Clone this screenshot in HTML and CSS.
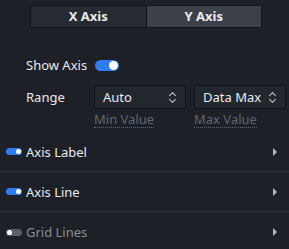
FILE: index.html
```html
<!DOCTYPE html>
<html lang="en">
<head>
    <meta charset="UTF-8">
    <title>Axis Settings</title>
    <link rel="stylesheet" href="styles.css">
</head>
<body>
    <div class="tabs">
        <div class="tab">X Axis</div>
        <div class="tab active">Y Axis</div>
    </div>

    <div class="form">
        <div class="row">
            <span class="label">Show Axis</span>
            <span class="switch on"></span>
        </div>
        <div class="row range">
            <span class="label">Range</span>
            <div class="field">
                <div class="select">Auto<span class="arrows"></span></div>
                <span class="hint">Min Value</span>
            </div>
            <div class="field">
                <div class="select">Data Max<span class="arrows"></span></div>
                <span class="hint">Max Value</span>
            </div>
        </div>
    </div>

    <div class="sections">
        <div class="section">
            <span class="mini on"></span>
            <span class="title">Axis Label</span>
            <span class="chevron"></span>
        </div>
        <div class="section">
            <span class="mini on"></span>
            <span class="title">Axis Line</span>
            <span class="chevron"></span>
        </div>
        <div class="section off">
            <span class="mini"></span>
            <span class="title">Grid Lines</span>
            <span class="chevron"></span>
        </div>
    </div>
</body>
</html>
```

FILE: styles.css
```css
body {
    margin: 0;
    background-color: #1d2027;
    font-family: 'Noto Sans', 'Open Sans', sans-serif;
    font-size: 13px;
    color: #e8eaee;
    overflow: hidden;
}

.tabs {
    display: flex;
    width: 232px;
    height: 23px;
    margin: 5px 0 0 30px;
    border: 1px solid #121418;
    box-sizing: border-box;
}

.tab {
    flex: 1;
    text-align: center;
    line-height: 21px;
    font-weight: bold;
    background-color: #262a31;
}

.tab.active {
    background-color: #3b4049;
    border-left: 1px solid #121418;
}

.form {
    padding: 27px 0 0 26px;
}

.row {
    display: flex;
    align-items: center;
    height: 20px;
}

.label {
    width: 68px;
    flex-shrink: 0;
}

.switch {
    position: relative;
    width: 24px;
    height: 11px;
    border-radius: 6px;
    background-color: #2f7cf6;
    margin-left: 1px;
}

.switch:after {
    content: "";
    position: absolute;
    right: 1px;
    top: 1px;
    width: 9px;
    height: 9px;
    border-radius: 50%;
    background-color: #ffffff;
}

.range {
    margin-top: 10px;
    align-items: flex-start;
    height: auto;
}

.range .label {
    line-height: 24px;
}

.field {
    display: flex;
    flex-direction: column;
    flex-shrink: 0;
    width: 92px;
    margin-right: 8px;
}

.field:last-child {
    margin-right: 0;
}

.select {
    position: relative;
    height: 24px;
    line-height: 22px;
    box-sizing: border-box;
    border: 1px solid #121418;
    background-color: #22262d;
    padding-left: 8px;
}

.arrows {
    position: absolute;
    right: 9px;
    top: 6px;
    width: 7px;
    height: 11px;
}

.arrows:before,
.arrows:after {
    content: "";
    position: absolute;
    left: 1px;
    width: 4px;
    height: 4px;
    border-left: 1.5px solid #c4c8cf;
    border-top: 1.5px solid #c4c8cf;
}

.arrows:before {
    top: 1px;
    transform: rotate(45deg);
}

.arrows:after {
    top: 5px;
    transform: rotate(-135deg);
}

.hint {
    align-self: flex-start;
    margin-top: 2px;
    line-height: 16px;
    color: #5f6671;
    border-bottom: 1px dotted #5f6671;
}

.sections {
    margin-top: 4px;
}

.section {
    display: flex;
    align-items: center;
    height: 40px;
    box-sizing: border-box;
    padding: 0 12px 0 6px;
    border-bottom: 1px solid #2a2d34;
}

.section:last-child {
    border-bottom: none;
}

.mini {
    position: relative;
    width: 16px;
    height: 7px;
    border-radius: 4px;
    background-color: #5b5f66;
    margin-right: 4px;
}

.mini.on {
    background-color: #2f7cf6;
}

.mini:after {
    content: "";
    position: absolute;
    left: 1px;
    top: 1px;
    width: 5px;
    height: 5px;
    border-radius: 50%;
    background-color: #ffffff;
}

.mini.on:after {
    left: auto;
    right: 1px;
}

.title {
    flex: 1;
}

.off .title {
    color: #8a8e95;
}

.chevron {
    width: 0;
    height: 0;
    border-top: 4px solid transparent;
    border-bottom: 4px solid transparent;
    border-left: 4px solid #a9bcd8;
}
```
